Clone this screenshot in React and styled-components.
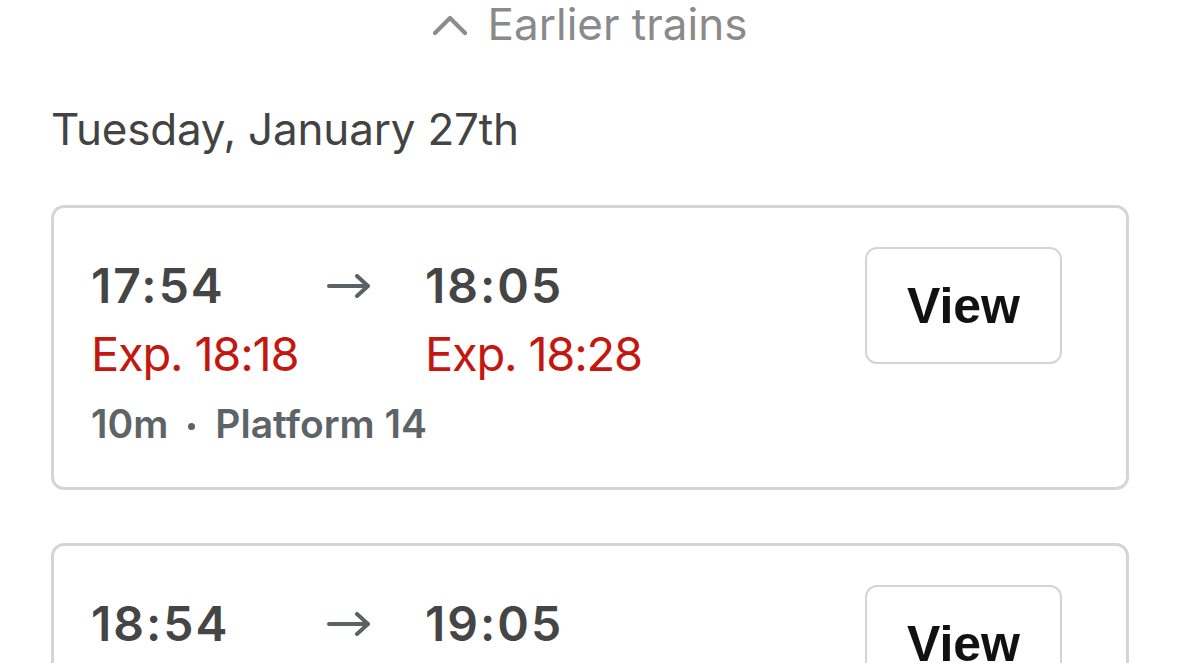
import styled, { createGlobalStyle } from "styled-components";

const GlobalStyle = createGlobalStyle`
  body {
    margin: 0;
    background: #ffffff;
    font-family: Inter, "Noto Sans", sans-serif;
  }
`;

const trains = [
  { dep: "17:54", arr: "18:05", expDep: "18:18", expArr: "18:28", dur: "10m", platform: "14" },
  { dep: "18:54", arr: "19:05", expDep: "19:18", expArr: "19:28", dur: "10m", platform: "14" },
];

export default function App() {
  return (
    <>
      <GlobalStyle />
      <Page>
        <EarlierButton>
          <svg width="34" height="22" viewBox="0 0 34 22">
            <path d="M2 19 L17 4 L32 19" fill="none" stroke="#8c8c8c" strokeWidth="4.2" strokeLinecap="round" strokeLinejoin="round" />
          </svg>
          Earlier trains
        </EarlierButton>
        <DateHeading>Tuesday, January 27th</DateHeading>
        <List>
          {trains.map((t) => (
            <Card key={t.dep}>
              <Info>
                <Row>
                  <Time>{t.dep}</Time>
                  <Arrow>
                    <svg width="44" height="24" viewBox="0 0 44 24">
                      <path d="M2 12 H40 M30 2 L41 12 L30 22" fill="none" stroke="#5b6266" strokeWidth="4" strokeLinecap="round" strokeLinejoin="round" />
                    </svg>
                  </Arrow>
                  <Time>{t.arr}</Time>
                </Row>
                <Row>
                  <Expected>Exp. {t.expDep}</Expected>
                  <span />
                  <Expected>Exp. {t.expArr}</Expected>
                </Row>
                <Meta>
                  {t.dur}
                  <Dot />
                  Platform {t.platform}
                </Meta>
              </Info>
              <ViewButton>View</ViewButton>
            </Card>
          ))}
        </List>
      </Page>
    </>
  );
}

const Page = styled.div`
  padding: 0 50px 0 51px;
  height: 663px;
  overflow: hidden;
  box-sizing: border-box;
`;

const EarlierButton = styled.div`
  display: flex;
  align-items: center;
  justify-content: center;
  gap: 21px;
  height: 48px;
  font-size: 44px;
  line-height: 48px;
  color: #8a8a8a;
  letter-spacing: 0;
  svg {
    margin-top: 2px;
  }
`;

const DateHeading = styled.h2`
  margin: 57px 0 0 0;
  font-size: 44px;
  line-height: 48px;
  font-weight: 400;
  color: #434343;
  letter-spacing: -0.2px;
`;

const List = styled.div`
  display: flex;
  flex-direction: column;
  gap: 53px;
  margin-top: 52px;
`;

const Card = styled.div`
  display: flex;
  justify-content: space-between;
  align-items: flex-start;
  border: 3px solid #d4d6d6;
  border-radius: 13px;
  padding: 39px 64px 40px 37px;
`;

const Info = styled.div`
  display: flex;
  flex-direction: column;
  gap: 12px;
  margin-top: 11px;
`;

const Row = styled.div`
  display: grid;
  grid-template-columns: 234px 100px auto;
  align-items: center;
`;

const Time = styled.span`
  font-size: 48px;
  line-height: 56px;
  font-weight: 600;
  color: #454545;
  letter-spacing: 2px;
`;

const Arrow = styled.span`
  display: flex;
  align-items: center;
  height: 56px;
  margin-left: 2px;
`;

const Expected = styled.span`
  font-size: 47px;
  line-height: 56px;
  font-weight: 400;
  color: #c3170f;
  letter-spacing: -1.2px;
`;

const Meta = styled.div`
  display: flex;
  align-items: center;
  margin-top: 7px;
  font-size: 39px;
  line-height: 46px;
  font-weight: 600;
  color: #5d6468;
  letter-spacing: 0;
`;

const Dot = styled.span`
  width: 7px;
  height: 7px;
  border-radius: 50%;
  background: #5d6468;
  margin: 4px 20px 0 20px;
`;

const ViewButton = styled.button`
  width: 197px;
  height: 117px;
  border: 2px solid #d3d5d5;
  border-radius: 12px;
  background: #ffffff;
  font-family: "Liberation Sans", Arial, sans-serif;
  font-weight: 700;
  font-size: 50px;
  color: #111111;
  padding: 0;
  flex-shrink: 0;
`;
